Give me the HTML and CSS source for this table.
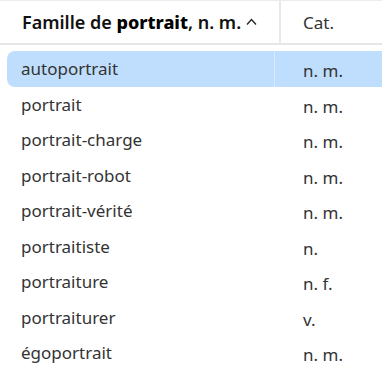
FILE: index.html
```html
<!DOCTYPE html>
<html>
<head>
  <meta charset="UTF-8">
  <title>Famille de portrait</title>
  <link rel="stylesheet" href="styles.css">
</head>
<body>

<div class="table">
  <div class="head">
    <div class="hcell first">
      <span>Famille de <b>portrait</b>, n. m.</span>
      <svg class="sort" width="11" height="7" viewBox="0 0 11 7"><polyline points="1,6.5 5.5,1.5 10,6.5" fill="none" stroke="#222" stroke-width="1.3"/></svg>
    </div>
    <div class="hcell">Cat.</div>
  </div>

  <div class="rows">
    <div class="row selected"><div class="cell word">autoportrait</div><div class="cell cat">n. m.</div></div>
    <div class="row"><div class="cell word">portrait</div><div class="cell cat">n. m.</div></div>
    <div class="row"><div class="cell word">portrait-charge</div><div class="cell cat">n. m.</div></div>
    <div class="row"><div class="cell word">portrait-robot</div><div class="cell cat">n. m.</div></div>
    <div class="row"><div class="cell word">portrait-vérité</div><div class="cell cat">n. m.</div></div>
    <div class="row"><div class="cell word">portraitiste</div><div class="cell cat">n.</div></div>
    <div class="row"><div class="cell word">portraiture</div><div class="cell cat">n. f.</div></div>
    <div class="row"><div class="cell word">portraiturer</div><div class="cell cat">v.</div></div>
    <div class="row"><div class="cell word">égoportrait</div><div class="cell cat">n. m.</div></div>
  </div>
</div>

</body>
</html>
```

FILE: styles.css
```css
body {
  margin: 0;
  background: #fff;
  font-family: "Noto Sans", sans-serif;
  font-size: 17px;
  color: #333;
}

.table {
  border-top: 1px solid #ececec;
}

.head {
  display: flex;
  height: 42px;
  border-bottom: 2px solid #e6e6e6;
}

.hcell {
  display: flex;
  align-items: center;
  padding-left: 22px;
  font-size: 17px;
  color: #333;
}

.hcell.first {
  width: 257px;
  border-right: 2px solid #e8e8e8;
  font-size: 18px;
  font-weight: 600;
  color: #111;
}

.hcell b {
  font-weight: 800;
  color: #000;
}

.sort {
  margin-left: 5px;
  margin-top: -1px;
}

.rows {
  padding-top: 6px;
}

.row {
  display: flex;
  height: 35.5px;
  margin-left: 7px;
  border-radius: 8px 0 0 8px;
}

.row.selected {
  background: #bfdefd;
}

.cell {
  display: flex;
  align-items: center;
}

.word {
  width: 253px;
  padding-left: 14px;
  border-right: 1px solid rgba(255, 255, 255, 0.4);
}

.cat {
  padding-left: 28px;
  padding-top: 4px;
}
```
